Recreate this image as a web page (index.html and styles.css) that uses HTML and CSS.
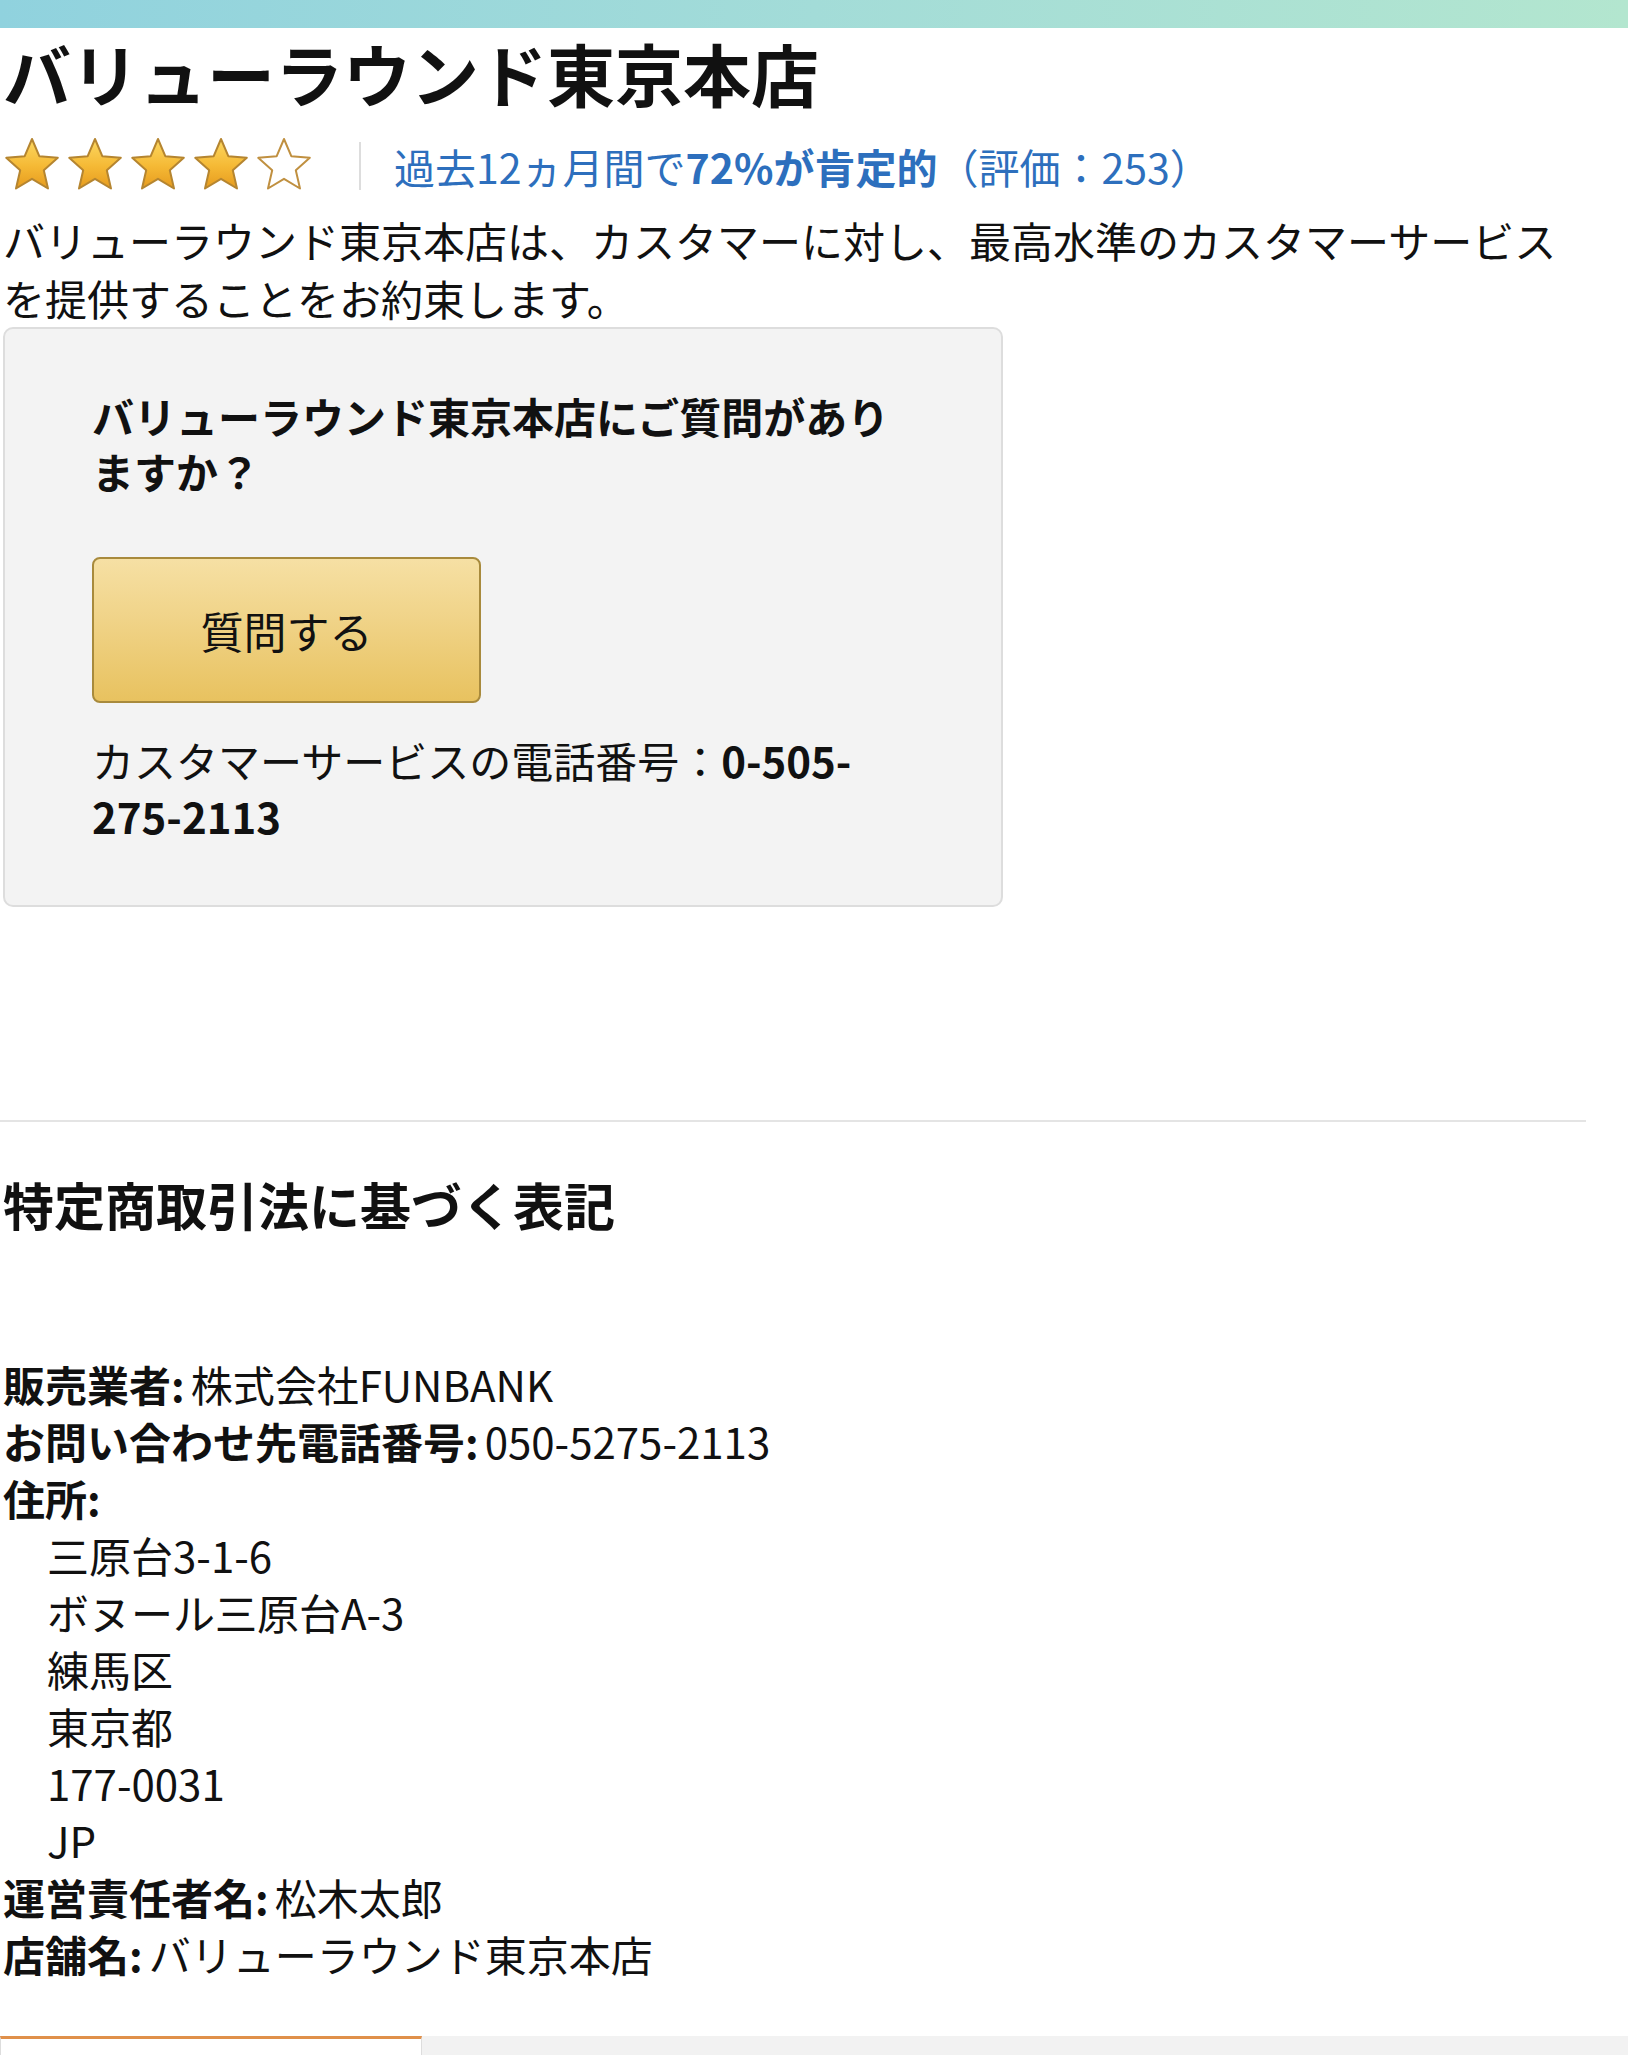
FILE: index.html
```html
<!DOCTYPE html>
<html lang="ja">
<head>
<meta charset="utf-8">
<title>バリューラウンド東京本店</title>
<link rel="stylesheet" href="styles.css">
</head>
<body>
<div class="topbar"></div>
<main class="page">
  <h1 class="title">バリューラウンド東京本店</h1>
  <div class="rating">
    <svg class="stars" width="316" height="58" viewBox="0 0 316 58" aria-hidden="true">
      <defs>
        <linearGradient id="gold" x1="0" y1="0" x2="0" y2="1">
          <stop offset="0" stop-color="#fcd862"/>
          <stop offset="0.55" stop-color="#f5b935"/>
          <stop offset="1" stop-color="#e69b1e"/>
        </linearGradient>
        <path id="star" d="M29 2 L36.3 19.2 L54.8 20.8 L40.8 33.2 L45 51.5 L29 41.8 L13 51.5 L17.2 33.2 L3.2 20.8 L21.7 19.2 Z"/>
      </defs>
      <use href="#star" x="0" fill="url(#gold)" stroke="#b58530" stroke-width="2" stroke-linejoin="round"/>
      <use href="#star" x="63" fill="url(#gold)" stroke="#b58530" stroke-width="2" stroke-linejoin="round"/>
      <use href="#star" x="126" fill="url(#gold)" stroke="#b58530" stroke-width="2" stroke-linejoin="round"/>
      <use href="#star" x="189" fill="url(#gold)" stroke="#b58530" stroke-width="2" stroke-linejoin="round"/>
      <use href="#star" x="252" fill="#ffffff" stroke="#c09040" stroke-width="2" stroke-linejoin="round"/>
    </svg>
    <span class="sep"></span>
    <a class="rating-link" href="#">過去12ヵ月間で<b>72%が肯定的</b>（評価：253）</a>
  </div>
  <p class="desc">バリューラウンド東京本店は、カスタマーに対し、最高水準のカスタマーサービスを提供することをお約束します。</p>

  <section class="ask-box">
    <h2 class="ask-title">バリューラウンド東京本店にご質問がありますか？</h2>
    <button class="ask-btn" type="button">質問する</button>
    <p class="phone">カスタマーサービスの電話番号：<b>0-505-<wbr>275-2113</b></p>
  </section>

  <hr class="rule">

  <h2 class="law-title">特定商取引法に基づく表記</h2>

  <ul class="info">
    <li><b>販売業者:</b>株式会社FUNBANK</li>
    <li><b>お問い合わせ先電話番号:</b>050-5275-2113</li>
    <li><b>住所:</b></li>
    <li class="addr">三原台3-1-6</li>
    <li class="addr">ボヌール三原台A-3</li>
    <li class="addr">練馬区</li>
    <li class="addr">東京都</li>
    <li class="addr">177-0031</li>
    <li class="addr">JP</li>
    <li><b>運営責任者名:</b>松木太郎</li>
    <li><b>店舗名:</b>バリューラウンド東京本店</li>
  </ul>
</main>
<div class="tabs">
  <div class="tab active"></div>
  <div class="tab-rest"></div>
</div>
</body>
</html>
```

FILE: styles.css
```css
html, body {
  margin: 0;
  padding: 0;
  background: #ffffff;
}

body {
  font-family: "Noto Sans CJK JP", "Noto Sans", sans-serif;
  color: #111111;
}

.topbar {
  height: 28px;
  background: linear-gradient(90deg, #90d2de 0%, #a3dcd8 50%, #b3e6cf 100%);
}

.page {
  padding: 0 42px 0 3px;
}

.title {
  margin: 5px 0 0 0;
  font-size: 68px;
  line-height: 80px;
  font-weight: 700;
  letter-spacing: 0;
}

.rating {
  display: flex;
  align-items: center;
  height: 56px;
  margin-top: 25px;
}

.stars {
  display: block;
  flex: none;
}

.sep {
  width: 2px;
  height: 48px;
  background: #dddddd;
  margin: 0 33px 0 40px;
  flex: none;
}

.rating-link {
  font-size: 41px;
  line-height: 56px;
  color: #2d6fbd;
  text-decoration: none;
  white-space: nowrap;
}

.rating-link b {
  font-weight: 700;
}

.desc {
  margin: 17px 0 0 0;
  font-size: 42px;
  line-height: 58px;
}

.ask-box {
  box-sizing: border-box;
  width: 1000px;
  margin-top: 0;
  padding: 59px 88px 61px 87px;
  background: #f3f3f3;
  border: 2px solid #dddddd;
  border-radius: 10px;
}

.ask-title {
  margin: 0;
  font-size: 42px;
  line-height: 55px;
  font-weight: 700;
}

.ask-btn {
  display: block;
  box-sizing: border-box;
  width: 389px;
  height: 146px;
  margin: 59px 0 29px 0;
  padding: 0;
  font-family: inherit;
  font-size: 43px;
  color: #111111;
  background: linear-gradient(180deg, #f6e0a4 0%, #efd183 50%, #e8c25f 100%);
  border: 2px solid #a88a3c;
  border-radius: 8px;
}

.phone {
  margin: 0;
  font-size: 42px;
  line-height: 56px;
}

.phone b {
  font-weight: 700;
}

.rule {
  margin: 213px 0 0 -3px;
  height: 0;
  border: 0;
  border-top: 2px solid #e4e4e4;
}

.law-title {
  margin: 52px 0 0 0;
  font-size: 51px;
  line-height: 60px;
  font-weight: 700;
}

.info {
  list-style: none;
  margin: 121px 0 0 0;
  padding: 0;
  font-size: 42px;
  line-height: 57px;
}

.info b {
  font-weight: 700;
  margin-right: 6px;
}

.info .addr {
  padding-left: 44px;
}

.tabs {
  display: flex;
  margin-top: 54px;
  height: 60px;
}

.tab {
  box-sizing: border-box;
  width: 422px;
  flex: none;
  background: #ffffff;
  border-top: 3px solid #e0904a;
  border-left: 1px solid #dddddd;
  border-right: 1px solid #dddddd;
}

.tab-rest {
  flex: 1;
  background: #f2f2f2;
}
```
